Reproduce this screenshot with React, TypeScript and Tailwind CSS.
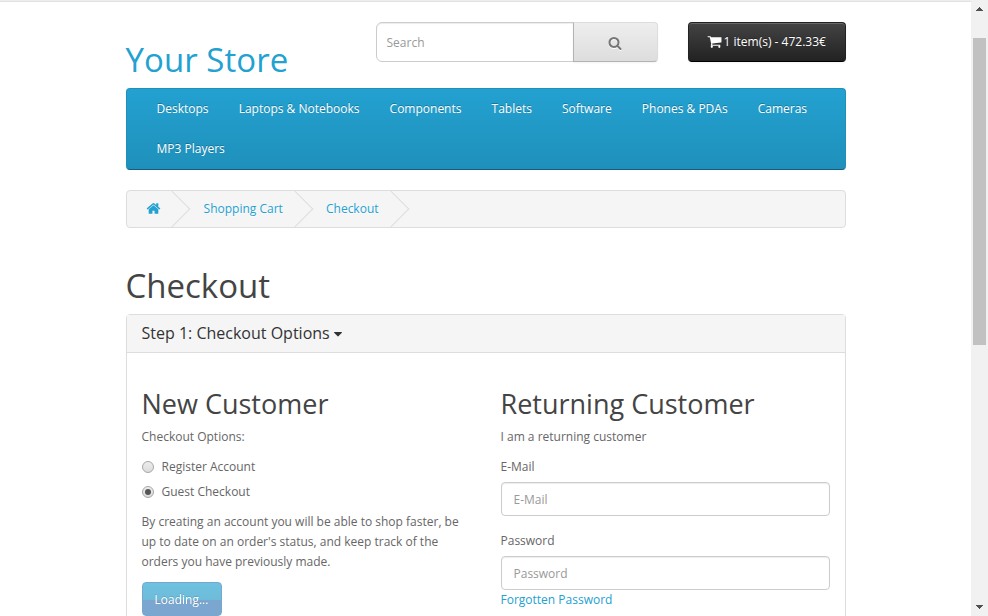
import React from "react";

const icons = {
  search:
    "M1216 832q0-185-131.5-316.5t-316.5-131.5-316.5 131.5-131.5 316.5 131.5 316.5 316.5 131.5 316.5-131.5 131.5-316.5zm512 832q0 52-38 90t-90 38q-54 0-90-38l-343-342q-179 124-399 124-143 0-273.5-55.5t-225-150-150-225-55.5-273.5 55.5-273.5 150-225 225-150 273.5-55.5 273.5 55.5 225 150 150 225 55.5 273.5q0 220-124 399l343 343q37 37 37 90z",
  home:
    "M1472 992v480q0 26-19 45t-45 19h-384v-384h-256v384h-384q-26 0-45-19t-19-45v-480q0-1 .5-3t.5-3l575-474 575 474q1 2 1 6zm223-69l-62 74q-8 9-21 11h-3q-13 0-21-7l-692-577-692 577q-12 8-24 7-13-2-21-11l-62-74q-8-10-7-23.5t11-21.5l719-599q32-26 76-26t76 26l244 204v-195q0-14 9-23t23-9h192q14 0 23 9t9 23v408l219 182q10 8 11 21.5t-7 23.5z",
  cart:
    "M704 1536q0 52-38 90t-90 38-90-38-38-90 38-90 90-38 90 38 38 90zm896 0q0 52-38 90t-90 38-90-38-38-90 38-90 90-38 90 38 38 90zm128-1088v512q0 24-16.5 42.5t-40.5 21.5l-1044 122q13 60 13 70 0 16-24 64h920q26 0 45 19t19 45-19 45-45 19h-1024q-26 0-45-19t-19-45q0-11 8-31.5t16-36 21.5-40 15.5-29.5l-177-823h-204q-26 0-45-19t-19-45 19-45 45-19h256q16 0 28.5 6.5t19.5 15.5 13 24.5 8 26 5.5 29.5 4.5 26h1201q26 0 45 19t19 45z",
  caret:
    "M1408 704q0 26-19 45l-448 448q-19 19-45 19t-45-19l-448-448q-19-19-19-45t19-45 45-19h896q26 0 45 19t19 45z",
};

function Icon({ name, className }: { name: keyof typeof icons; className: string }) {
  return (
    <svg viewBox="0 0 1792 1792" fill="currentColor" className={className}>
      <path d={icons[name]} />
    </svg>
  );
}

const menu = ["Desktops", "Laptops & Notebooks", "Components", "Tablets", "Software", "Phones & PDAs", "Cameras", "MP3 Players"];

function Crumb({ children }: { children: React.ReactNode }) {
  return (
    <li className="relative mr-[3.1px] flex h-5 items-center whitespace-nowrap px-5">
      <a className="text-[#23a1d1]">{children}</a>
      <span className="absolute -right-[5px] -top-[3px] size-[26px] -rotate-45 border-b border-r border-[#ddd]" />
    </li>
  );
}

function Radio({ label, checked }: { label: string; checked?: boolean }) {
  return (
    <label className="flex h-5 items-center">
      <span className="mr-[7.5px] flex size-[12.5px] items-center justify-center rounded-full border border-[#a6a6a6] bg-linear-to-b from-[#ededed] to-[#dcdcdc]">
        {checked && <span className="size-[6px] rounded-full bg-[#555]" />}
      </span>
      {label}
    </label>
  );
}

function Field({ label }: { label: string }) {
  return (
    <div>
      <label className="mb-[5px] block">{label}</label>
      <input
        placeholder={label}
        className="block h-[34px] w-full rounded border border-[#ccc] bg-white px-3 pt-[2px] text-[12px] shadow-[inset_0_1px_1px_rgba(0,0,0,0.075)] placeholder:text-[#999]"
      />
    </div>
  );
}

function ScrollBar() {
  return (
    <div className="flex h-full w-[17px] flex-col items-center bg-[#f1f1f1]">
      <svg className="mt-[7px] h-1 w-[7px]" viewBox="0 0 7 4" shapeRendering="crispEdges">
        <path d="M3 0h1v1h1v1h1v1h1v1H0V3h1V2h1V1h1z" fill="#505050" />
      </svg>
      <div className="mt-[27px] h-[307px] w-[13px] bg-[#c1c1c1]" />
      <svg className="mb-[7px] mt-auto h-1 w-[7px]" viewBox="0 0 7 4" shapeRendering="crispEdges">
        <path d="M0 0h7v1H6v1H5v1H4v1H3V3H2V2H1V1H0z" fill="#505050" />
      </svg>
    </div>
  );
}

export default function App() {
  return (
    <div className="flex h-[616px] w-[988px] overflow-hidden bg-white font-['Open_Sans',sans-serif] text-[12px] leading-5 text-[#666]">
      <div className="w-[971px]">
        <div className="h-[2px] border-b border-[#e2e2e2] bg-[#eee]" />
        <div className="mx-auto w-[720px]">
          <header className="flex h-[86.3px]">
            <h1 className="w-[250px] pt-10 text-[33px] leading-[36.3px] tracking-[0.05px] text-[#23a1d1]">Your Store</h1>
            <div className="mr-[30px] mt-5 flex h-10 w-[282.5px]">
              <input
                placeholder="Search"
                className="h-10 w-[198px] rounded-l-md border border-[#ccc] px-[10px] text-[12px] shadow-[inset_0_1px_1px_rgba(0,0,0,0.075)] placeholder:text-[#999]"
              />
              <button className="-ml-px flex h-10 flex-1 items-center justify-center rounded-r border border-[#ddd] border-b-[#b3b3b3] border-l-[#b3b3b3] bg-linear-to-b from-[#eee] to-[#ddd] text-[#777] shadow-[0_1px_2px_rgba(0,0,0,0.05)]">
                <Icon name="search" className="mr-px mt-[2px] size-[14px] drop-shadow-[0_1px_0_#fff]" />
              </button>
            </div>
            <button className="mt-5 flex h-10 flex-1 items-center justify-center rounded border border-[#222] border-b-black bg-linear-to-b from-[#444] to-[#222] text-white shadow-[inset_0_1px_0_rgba(255,255,255,0.2),0_1px_2px_rgba(0,0,0,0.05)] text-shadow-[0_-1px_0_rgba(0,0,0,0.25)]">
              <Icon name="cart" className="-ml-px -mt-px mr-[2px] size-[15px]" />
              1 item(s) - 472.33€
            </button>
          </header>

          <nav className="flex h-[82px] flex-wrap content-start rounded border border-[#1f90bb] border-b-[#145e7a] bg-linear-to-b from-[#23a1d1] to-[#1f90bb] px-[15px] text-white text-shadow-[0_-1px_0_rgba(0,0,0,0.25)]">
            {menu.map((m) => (
              <a key={m} className="px-[15.04px] py-[10px]">
                {m}
              </a>
            ))}
          </nav>

          <ul className="mt-5 flex h-[38px] overflow-hidden rounded border border-[#ddd] bg-[#f5f5f5] py-2 text-shadow-[0_1px_0_#fff]">
            <li className="relative mr-[4.1px] flex h-5 items-center pl-5 pr-5">
              <a className="text-[#23a1d1]">
                <Icon name="home" className="-ml-[1px] -mr-[1px] -mt-[2px] size-[15px]" />
              </a>
              <span className="absolute -right-[5px] -top-[3px] size-[26px] -rotate-45 border-b border-r border-[#ddd]" />
            </li>
            <Crumb>Shopping Cart</Crumb>
            <Crumb>Checkout</Crumb>
          </ul>

          <h1 className="mb-[9.3px] mt-10 text-[33px] leading-[36.3px] text-[#444]">Checkout</h1>

          <section className="h-[340px] rounded border border-[#ddd]">
            <h4 className="flex h-[37px] items-center bg-[#f5f5f5] px-[15px] text-[16px] leading-[17px] text-[#333]">
              Step 1: Checkout Options
              <Icon name="caret" className="ml-[1px] mt-px size-[14px]" />
            </h4>
            <div className="grid grid-cols-2 gap-[30px] border-t border-[#ddd] px-[15px] pt-[35.7px]">
              <div>
                <h2 className="mb-[8.5px] text-[27px] leading-[29.7px] text-[#444]">New Customer</h2>
                <p className="mb-[10px]">Checkout Options:</p>
                <div className="mb-[10px] flex flex-col gap-[5px]">
                  <Radio label="Register Account" />
                  <Radio label="Guest Checkout" checked />
                </div>
                <p className="mb-[10px]">
                  By creating an account you will be able to shop faster, be up to date on an order's status, and keep track of the orders you have previously made.
                </p>
                <button className="h-[34px] w-20 rounded border border-[#3278b3] bg-[linear-gradient(#23a1d1_0,#2098c6_17px,#3478b8_17px)] pt-[3px] text-white opacity-65 text-shadow-[0_-1px_0_rgba(0,0,0,0.25)]">
                  Loading...
                </button>
              </div>
              <div>
                <h2 className="mb-[8.5px] text-[27px] leading-[29.7px] text-[#444]">Returning Customer</h2>
                <p className="mb-[10px]">I am a returning customer</p>
                <div className="flex flex-col gap-[15px]">
                  <Field label="E-Mail" />
                  <Field label="Password" />
                </div>
                <a className="block text-[#23a1d1]">Forgotten Password</a>
              </div>
            </div>
          </section>
        </div>
      </div>
      <ScrollBar />
    </div>
  );
}
